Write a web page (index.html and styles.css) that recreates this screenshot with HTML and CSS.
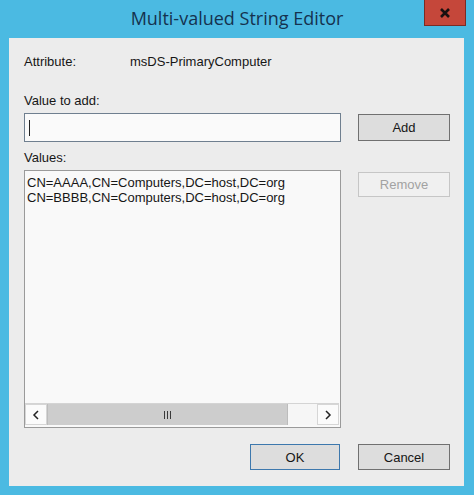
FILE: index.html
```html
<!DOCTYPE html>
<html>
<head>
<meta charset="utf-8">
<link rel="stylesheet" href="styles.css">
</head>
<body>
<div class="window">
  <div class="titlebar">
    <div class="spacer"></div>
    <div class="title">Multi-valued String Editor</div>
    <div class="controls">
      <div class="close"><svg width="12" height="10" viewBox="0 0 12 10"><path d="M2 1 L10 9 M10 1 L2 9" stroke="#1a1010" stroke-width="2.6" fill="none"/></svg></div>
    </div>
  </div>
  <div class="client">
    <div class="attr-row">
      <span class="attr-label">Attribute:</span>
      <span class="attr-value">msDS-PrimaryComputer</span>
    </div>
    <div class="label label-add">Value to add:</div>
    <div class="row row-add">
      <div class="textbox"><span class="caret"></span></div>
      <div class="btn btn-add">Add</div>
    </div>
    <div class="label label-values">Values:</div>
    <div class="row row-list">
      <div class="listbox">
        <div class="items">
          <div class="item">CN=AAAA,CN=Computers,DC=host,DC=org</div>
          <div class="item">CN=BBBB,CN=Computers,DC=host,DC=org</div>
        </div>
        <div class="hscroll">
          <div class="arrow"><svg width="8" height="10" viewBox="0 0 8 10"><path d="M6 1 L2 5 L6 9" stroke="#222" stroke-width="1.5" fill="none"/></svg></div>
          <div class="thumb"><span class="grip"></span><span class="grip"></span><span class="grip"></span></div>
          <div class="track"></div>
          <div class="arrow"><svg width="8" height="10" viewBox="0 0 8 10"><path d="M2 1 L6 5 L2 9" stroke="#222" stroke-width="1.5" fill="none"/></svg></div>
        </div>
      </div>
      <div class="btn btn-remove">Remove</div>
    </div>
    <div class="footer">
      <div class="btn btn-ok">OK</div>
      <div class="btn btn-cancel">Cancel</div>
    </div>
  </div>
</div>
</body>
</html>
```

FILE: styles.css
```css
html, body {
  margin: 0;
  padding: 0;
}
body {
  width: 474px;
  height: 495px;
  overflow: hidden;
  font-family: "Liberation Sans", Arial, sans-serif;
  font-size: 13px;
  color: #161616;
}
.window {
  width: 474px;
  height: 495px;
  background: #4bbae2;
  display: flex;
  flex-direction: column;
}
.titlebar {
  height: 38px;
  display: grid;
  grid-template-columns: 1fr auto 1fr;
  align-items: start;
}
.title {
  font-family: "Open Sans", "Liberation Sans", sans-serif;
  font-size: 18px;
  color: #15324f;
  padding-top: 6px;
  white-space: nowrap;
}
.controls {
  display: flex;
  justify-content: flex-end;
  padding-right: 8px;
}
.close {
  width: 40px;
  height: 25px;
  background: #c5473a;
  border: 1px solid #7b2c24;
  border-top: none;
  display: flex;
  align-items: center;
  justify-content: center;
  box-sizing: content-box;
}
.client {
  margin: 0 10px 9px 9px;
  flex: 1;
  background: #ececec;
  padding: 0 14px 0 15px;
  display: flex;
  flex-direction: column;
}
.attr-row {
  height: 15px;
  margin-top: 16px;
  display: flex;
  line-height: 15px;
}
.attr-label {
  width: 106px;
}
.label {
  height: 15px;
  line-height: 15px;
}
.label-add {
  margin-top: 24px;
}
.row {
  display: flex;
  justify-content: space-between;
  align-items: flex-start;
}
.row-add {
  margin-top: 5px;
  height: 29px;
}
.textbox {
  width: 317px;
  height: 29px;
  box-sizing: border-box;
  border: 1px solid #6f7f8f;
  background: #fafafa;
  display: flex;
  align-items: center;
  padding-left: 4px;
}
.caret {
  width: 1px;
  height: 16px;
  background: #222;
}
.btn {
  width: 92px;
  height: 27px;
  box-sizing: border-box;
  border: 1px solid #707070;
  background: #dddddd;
  display: flex;
  align-items: center;
  justify-content: center;
  font-size: 13px;
  color: #161616;
}
.btn-add {
  margin-top: 1px;
}
.label-values {
  margin-top: 8px;
}
.row-list {
  margin-top: 5px;
}
.listbox {
  width: 317px;
  height: 258px;
  box-sizing: border-box;
  border: 1px solid #9a9a9a;
  background: #f9f9f9;
  display: flex;
  flex-direction: column;
}
.items {
  flex: 1;
  padding: 4px 0 0 2px;
}
.item {
  height: 15px;
  line-height: 15px;
  white-space: nowrap;
}
.hscroll {
  height: 21px;
  margin: 0 1px 2px 0;
  display: flex;
  border-top: 1px solid #d4d4d4;
  background: #f4f4f4;
}
.arrow {
  width: 22px;
  box-sizing: border-box;
  border: 1px solid #d6d6d6;
  background: #fbfbfb;
  display: flex;
  align-items: center;
  justify-content: center;
}
.thumb {
  width: 239px;
  background: #cdcdcd;
  border-left: 1px solid #bcbcbc;
  border-right: 1px solid #bcbcbc;
  display: flex;
  align-items: center;
  justify-content: center;
  gap: 2px;
}
.grip {
  width: 1px;
  height: 8px;
  background: #3a3a3a;
}
.track {
  flex: 1;
  background: #f6f6f6;
}
.btn-remove {
  margin-top: 2px;
  height: 25px;
  border-color: #c6c6c6;
  background: #f0f0f0;
  color: #a2a2a2;
}
.footer {
  margin-top: 16px;
  display: flex;
  justify-content: flex-end;
  gap: 18px;
}
.btn-ok {
  width: 90px;
  height: 26px;
  border-color: #3d78ad;
}
.btn-cancel {
  height: 26px;
}
```
